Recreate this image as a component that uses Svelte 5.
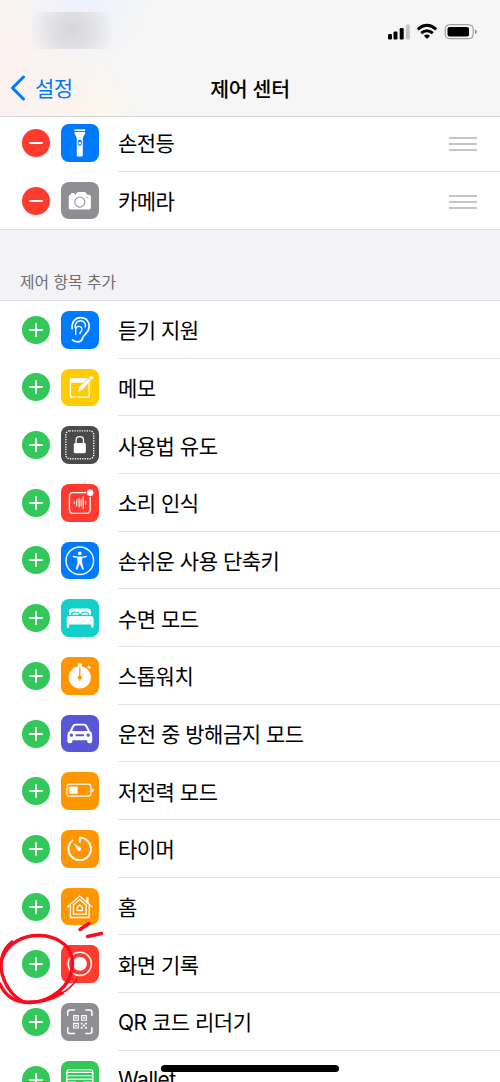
<script>
  // Controls already in the control center
  const included = [
    { id: 'flashlight', name: '손전등', color: '#007aff' },
    { id: 'camera', name: '카메라', color: '#8e8e93' }
  ];

  // Controls that can be added
  const available = [
    { id: 'hearing', name: '듣기 지원', color: '#007aff' },
    { id: 'notes', name: '메모', color: '#ffcc00' },
    { id: 'guided', name: '사용법 유도', color: '#4a4a4b' },
    { id: 'sound', name: '소리 인식', color: '#ff3b30' },
    { id: 'accessibility', name: '손쉬운 사용 단축키', color: '#007aff' },
    { id: 'sleep', name: '수면 모드', color: '#13cfcb' },
    { id: 'stopwatch', name: '스톱워치', color: '#ff9500' },
    { id: 'driving', name: '운전 중 방해금지 모드', color: '#5856d6' },
    { id: 'battery', name: '저전력 모드', color: '#ff9500' },
    { id: 'timer', name: '타이머', color: '#ff9500' },
    { id: 'home', name: '홈', color: '#ff9500' },
    { id: 'record', name: '화면 기록', color: '#ff3b30' },
    { id: 'qr', name: 'QR 코드 리더기', color: '#8e8e93' },
    { id: 'wallet', name: 'Wallet', color: '#34c759' }
  ];

  const soundBars = [
    [40, 3], [47, 9], [54, 12], [60, 9], [66, 17], [73, 4]
  ];
</script>

{#snippet glyph(id, color)}
  <svg class="glyph" viewBox="0 0 112 112" fill="none" stroke="#fff" stroke-linecap="round" stroke-linejoin="round">
    {#if id === 'flashlight'}
      <g fill="#fff" stroke="none">
        <path d="M40 16h32v5H40z" />
        <path d="M40 24h32c0 9-7 12-7 21v49a3 3 0 0 1-3 3H50a3 3 0 0 1-3-3V45c0-9-7-12-7-21z" />
        <rect x="50" y="47" width="12" height="18" rx="6" fill={color} />
        <circle cx="56" cy="57" r="4" />
      </g>
    {:else if id === 'camera'}
      <path fill="#fff" stroke="none" d="M29 38v-2q0-3 3-3h6q3 0 3 3v1h3l3-5q1-2 4-2h19q3 0 4 2l4 6h6q5 0 5 5v34q0 5-5 5H28q-5 0-5-5V43q0-5 6-5z" />
      <circle cx="56" cy="60" r="15" stroke={color} stroke-width="3" />
      <circle cx="77" cy="46" r="2" fill={color} stroke="none" />
    {:else if id === 'hearing'}
      <g stroke-width="5">
        <path d="M33 53C31 33 42 20 58 20c17 0 27 11 26 27-1 20-18 24-20 34-2 8-8 11-15 11-7 0-12-2-15-6" />
        <path d="M42 50c-1-14 7-21 16-21 11 0 17 9 14 19" stroke-width="4" />
        <path d="M44 70V55q0-9 9-9c9 0 11 7 8 13q-2 4-5 8" stroke-width="4" />
      </g>
    {:else if id === 'notes'}
      <path d="M76 29H34q-6 0-6 6v43q0 6 6 6h44q6 0 6-6V41" stroke-width="4" />
      <path fill="#fff" stroke="none" d="M28 29h50L66 41H28z" />
      <path fill="#fff" stroke={color} stroke-width="2" d="M48 69l6-16 28-26 8 7-27 29z" />
      <path fill="#fff" stroke="none" d="M84 25q7-8 12 0 1 4-4 8z" />
    {:else if id === 'guided'}
      <rect x="14.500" y="14.500" width="83" height="83" rx="11" stroke-width="4.200" stroke-dasharray="3.800 3.500" stroke-linecap="butt" />
      <path d="M45 53V42c0-14 22-14 22 0v11" stroke-width="4" />
      <rect x="38" y="51" width="36" height="30" rx="4" fill="#fff" stroke="none" />
    {:else if id === 'sound'}
      <path d="M74 25.500H37q-12 0-12 12v37q0 13 12 13h38q12 0 12-13V40" stroke-width="4" />
      <circle cx="87" cy="26" r="9.500" fill="#fff" stroke="none" />
      {#each soundBars as [x, h]}
        <path d="M{x} {56 - h}v{h * 2}" stroke-width="3.400" />
      {/each}
    {:else if id === 'accessibility'}
      <circle cx="56" cy="56" r="41" stroke-width="4.200" />
      <circle cx="56" cy="34" r="5.500" fill="#fff" stroke="none" />
      <path d="M37 43l13 3h12l13-3" stroke-width="4.500" />
      <path fill="#fff" stroke-width="2" d="M50 45h12v16l5 20h-3l-8-19-8 19h-3l5-20z" />
    {:else if id === 'sleep'}
      <g fill="#fff" stroke="none">
        <path d="M24 48V36q0-8 8-8h49q8 0 8 8v12z" />
        <path d="M30 48v-4q0-6 5-6h14q6 0 6 6h4q0-6 6-6h13q5 0 5 6v4z" fill={color} />
        <path d="M34 47q-1-6 4-6h10q5 0 5 6zM61 47q0-6 5-6h10q5 0 4 6z" />
        <path d="M24 51h64q9 0 9 9v23q0 3-3 3h-2q-2 0-2-3v-5q0-2-2-2H26q-2 0-2 2v5q0 3-2 3h-2q-3 0-3-3V60q0-9 7-9z" />
      </g>
    {:else if id === 'stopwatch'}
      <circle cx="56" cy="60.500" r="33" fill="#fff" stroke="none" />
      <rect x="50" y="19" width="12" height="12" rx="2" fill="#fff" stroke="none" />
      <path d="M80 27l7 7" stroke-width="6" stroke-linecap="butt" />
      <path d="M56 31v26" stroke={color} stroke-width="3.500" stroke-linecap="butt" />
      <circle cx="56" cy="61" r="6" fill={color} stroke="none" />
      <path d="M56 61v9" stroke={color} stroke-width="3" />
    {:else if id === 'driving'}
      <path fill="#fff" fill-rule="evenodd" stroke="none" d="M26 48l7-15q3-6 9-7h28q6 1 9 7l7 15q7 3 7 12v18q0 6-6 6h-3q-6 0-6-6v-3H34v3q0 6-6 6h-3q-6 0-6-6V60q0-9 7-12zM33 48h46l-6-13q-2-4-6-4H45q-4 0-6 4zM31 55a5 5 0 1 0 0 10 5 5 0 1 0 0-10zM81 55a5 5 0 1 0 0 10 5 5 0 1 0 0-10zM46 57q-3 0-3 3t3 3h20q3 0 3-3t-3-3z" />
    {:else if id === 'battery'}
      <rect x="18" y="36" width="71" height="36" rx="8" stroke-width="3.500" />
      <rect x="23.500" y="43" width="26" height="22" rx="2" fill="#fff" stroke="none" />
      <path d="M93 48q4 1 4 6t-4 6z" fill="#fff" stroke="none" />
    {:else if id === 'timer'}
      <path d="M56 35V23A33.500 33.500 0 1 1 34 31" stroke-width="6" />
      <path fill="#fff" stroke="none" d="M37 39l21 13q4 5 0 9-5 3-9-1z" />
    {:else if id === 'home'}
      <g stroke-width="4">
        <path d="M20 56L56 24l36 32" />
        <path d="M77 41V29h3v15" />
        <path d="M28 53v35h56V53" />
        <path d="M37 78V51l19-17 19 17v27z" />
        <path d="M48 67V58l8-8 8 8v9z" />
      </g>
    {:else if id === 'record'}
      <circle cx="56" cy="56" r="34.500" stroke-width="4.500" />
      <circle cx="56" cy="56" r="21" fill="#fff" stroke="none" />
    {:else if id === 'qr'}
      <path d="M20 37V27q0-6 6-6h14M74 21h12q6 0 6 6v10M92 74v11q0 6-6 6H74M40 91H26q-6 0-6-6V74" stroke-width="4.500" />
      <g stroke-width="3.500" stroke-linejoin="miter">
        <path d="M37.500 37.500h14v14h-14zM61.500 37.500h14v14h-14zM37.500 60.500h14v14h-14z" />
      </g>
      <path fill="#fff" stroke="none" d="M42 42h5v5h-5zM66 42h5v5h-5zM42 65h5v5h-5zM59 59h5v5h-5zM71 59h6v5h-6zM65 65h6v5h-6zM59 71h5v6h-5zM72 71h5v6h-5z" />
    {:else if id === 'wallet'}
      <rect x="17" y="26" width="78" height="63" rx="8" stroke-width="3.500" />
      <path d="M17 38q1-4 6-4h66q5 0 6 4M17 48q1-4 6-4h66q5 0 6 4M17 58q1-4 6-4h66q5 0 6 4" stroke-width="3.500" />
      <path fill="#fff" stroke="none" d="M16 61h26q4 0 6 3 8 6 16 0 2-3 6-3h26v21q0 8-8 8H24q-8 0-8-8z" />
    {/if}
  </svg>
{/snippet}

{#snippet row(item, added)}
  <li class="row">
    <button class="badge" class:remove={added} aria-label={added ? 'remove' : 'add'}></button>
    <span class="icon" style="background: {item.color}">{@render glyph(item.id, item.color)}</span>
    <div class="label">
      <span>{item.name}</span>
      {#if added}
        <i class="handle"></i>
      {/if}
    </div>
  </li>
{/snippet}

<div class="screen">
  <header>
    <div class="status">
      <div class="time-blur"></div>
      <svg width="90" height="18" viewBox="0 0 90 18">
        <rect x="1" y="11" width="4" height="5.500" rx="1.200" />
        <rect x="6.500" y="8.500" width="4" height="8" rx="1.200" />
        <rect x="12.700" y="5" width="4" height="11.500" rx="1.200" />
        <rect x="18.800" y="1.500" width="4" height="15" rx="1.200" fill="#c6c6c6" />
        <g fill="none" stroke="#000" stroke-width="2.900">
          <path d="M30.700 6.300q9.300-8 18.600 0" />
          <path d="M34.200 10.200q5.800-5 11.600 0" />
        </g>
        <path d="M36.900 12.800q3.100-2.600 6.200 0L40 16.100z" />
        <rect x="58.200" y="1.700" width="28" height="14" rx="4" fill="none" stroke="#8e8e8e" />
        <rect x="60.500" y="3.900" width="21.500" height="9.700" rx="2" />
        <path d="M88 6.500q1.800.500 1.800 2.200T88 10.900z" fill="#8e8e8e" />
      </svg>
    </div>
    <nav>
      <button class="back">
        <svg width="16" height="26" viewBox="0 0 16 26">
          <path d="M13.500 2L2.500 13l11 11" fill="none" stroke="#007aff" stroke-width="3" stroke-linecap="round" stroke-linejoin="round" />
        </svg>
        <span>설정</span>
      </button>
      <h1>제어 센터</h1>
    </nav>
  </header>

  <ul class="included">
    {#each included as item}
      {@render row(item, true)}
    {/each}
  </ul>

  <h2>제어 항목 추가</h2>

  <ul>
    {#each available as item}
      {@render row(item, false)}
    {/each}
  </ul>

  <!-- hand drawn marker around the screen recording button -->
  <svg class="marker" width="115" height="100" viewBox="0 0 115 100" fill="none" stroke="#fb0a20" stroke-linecap="round">
    <path d="M12 30C4 36 1 44 1 54c1 16 11 31 23 36 17 3 42-9 47-29 4-13 0-25-10-31C50 22 30 21 17 29 7 35 1 44 0 56" stroke-width="3.400" />
    <path d="M0 72c4 9 11 17 24 18 14 1 28-3 38-9" stroke-width="3.400" />
    <path d="M46 87c14-3 24-9 31-20" stroke-width="1.400" />
    <path d="M80 17.500l9-6" stroke-width="3.400" />
    <path d="M87.500 24.500l14-3" stroke-width="3.400" />
  </svg>

  <div class="home-bar"></div>
</div>

<style>
  :global(body) {
    margin: 0;
  }

  .screen {
    position: relative;
    width: 500px;
    height: 1082px;
    overflow: hidden;
    background: #fff;
    color: #000;
    font-family: Inter, "Noto Sans CJK KR", sans-serif;
  }

  header {
    position: relative;
    z-index: 1;
    box-sizing: border-box;
    height: 117px;
    border-bottom: 1px solid #d9d9da;
    background:
      radial-gradient(circle at 85px 0, #ebf1fd 0, transparent 65px),
      radial-gradient(circle at 85px 115px, #fdf5ea 0, transparent 60px),
      radial-gradient(ellipse 120px 130px at 0 70px, #fdf1ef 0, transparent 100%),
      #f6f6f6;
  }

  .status {
    display: flex;
    justify-content: space-between;
    align-items: flex-start;
    box-sizing: border-box;
    height: 60px;
    padding: 12px 23px 0 32px;
  }

  .status svg {
    margin-top: 10.500px;
  }

  .time-blur {
    width: 80px;
    height: 37px;
    background: radial-gradient(ellipse 46px 44px at 40px 18px, #d7d7da 0, #dedee1 35%, rgba(238, 238, 242, 0.5) 90%, transparent);
  }

  nav {
    display: grid;
    grid-template-columns: 1fr auto 1fr;
    align-items: center;
    height: 56px;
  }

  button {
    padding: 0;
    border: none;
    background: none;
    font: inherit;
  }

  .back {
    display: flex;
    align-items: center;
    gap: 9px;
    padding-left: 10px;
    color: #007aff;
    font-size: 21px;
    letter-spacing: -0.500px;
  }

  .back span {
    padding-bottom: 2px;
  }

  h1 {
    margin: 0;
    font-size: 20.500px;
    font-weight: 500;
    letter-spacing: -0.300px;
  }

  ul {
    margin: 0;
    padding: 0;
    list-style: none;
  }

  .included {
    margin-top: -2.900px;
  }

  .row {
    display: flex;
    align-items: center;
    height: 57.700px;
    padding-left: 22px;
  }

  .badge {
    position: relative;
    flex: none;
    width: 28px;
    height: 28px;
    border-radius: 50%;
    background: #34c759;
  }

  .badge::before,
  .badge::after {
    content: '';
    position: absolute;
    top: 13px;
    left: 7px;
    width: 14px;
    height: 2px;
    border-radius: 1px;
    background: #fff;
  }

  .badge::after {
    transform: rotate(90deg);
  }

  .badge.remove {
    background: #ff3b30;
  }

  .badge.remove::after {
    display: none;
  }

  .icon {
    flex: none;
    width: 37.600px;
    height: 37.600px;
    margin: 0 19.100px 0 11.300px;
    border-radius: 8px;
  }

  .glyph {
    display: block;
    width: 100%;
    height: 100%;
  }

  .label {
    display: flex;
    flex: 1;
    align-items: center;
    justify-content: space-between;
    box-sizing: border-box;
    height: 100%;
    padding: 0 23px 0 0;
    border-bottom: 1px solid #e2e2e4;
    font-size: 21px;
    letter-spacing: -0.500px;
    white-space: nowrap;
  }

  .row:last-child .label {
    border-bottom-color: transparent;
  }

  .handle {
    box-sizing: border-box;
    width: 28px;
    height: 14px;
    margin-top: 3px;
    border-top: 2px solid #c5c5c7;
    border-bottom: 2px solid #c5c5c7;
    background: linear-gradient(#c5c5c7, #c5c5c7) center / 100% 2px no-repeat;
  }

  h2 {
    display: flex;
    align-items: flex-end;
    box-sizing: border-box;
    height: 71.400px;
    margin: 0;
    padding: 0 0 7px 20px;
    border-top: 1px solid #dcdce0;
    border-bottom: 1px solid #dcdce0;
    background: #f2f2f7;
    color: #6d6d72;
    font-size: 15.800px;
    font-weight: 400;
  }

  .marker {
    position: absolute;
    top: 912px;
    left: 0;
  }

  .home-bar {
    position: absolute;
    bottom: 10px;
    left: 161px;
    width: 178px;
    height: 7px;
    border-radius: 4px;
    background: #000;
  }
</style>
